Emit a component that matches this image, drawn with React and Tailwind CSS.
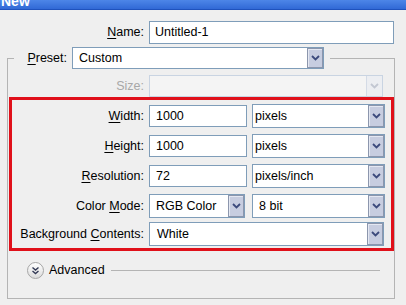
import React from "react";

function Chevron({ color = "#3c4a7c" }) {
  return (
    <svg width="9" height="6" viewBox="0 0 9 6">
      <path d="M1 1 L4.5 4.5 L8 1" stroke={color} strokeWidth="1.8" fill="none" />
    </svg>
  );
}

function DropBtn({ disabled }) {
  return disabled ? (
    <div className="flex w-[16px] items-center justify-center border-l border-[#d4dbe6] bg-[#eceef2]">
      <Chevron color="#c2c7d2" />
    </div>
  ) : (
    <div className="flex w-[16px] items-center justify-center border border-[#8c96ad] bg-[#c7cde0] shadow-[inset_1px_1px_0_#e4e8f2]">
      <Chevron />
    </div>
  );
}

function Select({ value, cls, pad = "pl-[6px]" }) {
  return (
    <div className={`flex h-[24px] items-stretch border border-[#7f9db9] bg-white ${cls}`}>
      <div className={`flex flex-1 items-center ${pad}`}>{value}</div>
      <DropBtn />
    </div>
  );
}

function U({ children }) {
  return <span className="underline underline-offset-2">{children}</span>;
}

export default function App() {
  return (
    <div className="relative h-[305px] w-[406px] overflow-hidden bg-[#efefef] font-['Liberation_Sans',Arial,sans-serif] text-[12.5px] text-black">
      <div className="h-[10px] overflow-hidden border-b border-[#1f52bd] bg-gradient-to-b from-[#4d86e8] to-[#3169d6]">
        <div className="-mt-[7px] pl-[1px] text-[14px] font-bold leading-[16px] text-white">New</div>
      </div>

      <div className="mt-[11px] flex h-[23px] items-center">
        <div className="w-[144px] text-right">
          <U>N</U>ame:
        </div>
        <div className="ml-[5px] flex h-[23px] w-[245px] items-center border border-[#7f9db9] bg-white pl-[5px]">
          Untitled-1
        </div>
      </div>

      <fieldset className="ml-[7px] mt-[3px] h-[252px] w-[382px] border border-[#b4b4b4]">
        <legend className="ml-[6px]">
          <div className="flex h-[22px] items-center pr-[6px]">
            <div className="w-[53px] text-right">
              <U>P</U>reset:
            </div>
            <div className="ml-[5px] flex h-[22px] w-[252px] items-stretch border border-[#7f9db9] bg-white">
              <div className="flex flex-1 items-center pl-[6px]">Custom</div>
              <DropBtn />
            </div>
          </div>
        </legend>

        <div className="mt-[6px] flex h-[22px] items-center">
          <div className="w-[136px] text-right text-[#a8a8a8]">Size:</div>
          <div className="ml-[5px] flex h-[22px] w-[234px] items-stretch border border-[#c9d4e2] bg-[#f4f4f4]">
            <div className="flex-1" />
            <DropBtn disabled />
          </div>
        </div>

        <div className="ml-[1px] w-[385px] border-[3px] border-[#e0101a] pb-[3px] pt-[5px]">
          <div className="flex flex-col gap-[8px]">
            <div className="flex h-[22px] items-center">
              <div className="w-[132px] text-right">
                <U>W</U>idth:
              </div>
              <div className="ml-[5px] flex h-[22px] w-[98px] items-center border border-[#7f9db9] bg-white pl-[6px]">1000</div>
              <Select value="pixels" cls="ml-[5px] w-[133px]" pad="pl-[2px]" />
            </div>
            <div className="flex h-[22px] items-center">
              <div className="w-[132px] text-right">
                <U>H</U>eight:
              </div>
              <div className="ml-[5px] flex h-[22px] w-[98px] items-center border border-[#7f9db9] bg-white pl-[6px]">1000</div>
              <Select value="pixels" cls="ml-[5px] w-[133px]" pad="pl-[2px]" />
            </div>
            <div className="flex h-[22px] items-center">
              <div className="w-[132px] text-right">
                <U>R</U>esolution:
              </div>
              <div className="ml-[5px] flex h-[22px] w-[98px] items-center border border-[#7f9db9] bg-white pl-[6px]">72</div>
              <Select value="pixels/inch" cls="ml-[5px] w-[133px]" pad="pl-[2px]" />
            </div>
            <div className="flex h-[22px] items-center">
              <div className="w-[132px] text-right">
                Color <U>M</U>ode:
              </div>
              <Select value="RGB Color" cls="ml-[5px] w-[96px]" />
              <Select value="8 bit" cls="ml-[7px] w-[133px]" />
            </div>
          </div>
          <div className="mt-[6px] flex h-[22px] items-center">
            <div className="w-[132px] text-right">
              Background <U>C</U>ontents:
            </div>
            <Select value="White" cls="ml-[5px] w-[235px]" pad="pl-[7px]" />
          </div>
        </div>

        <div className="mt-[11px] flex h-[17px] items-center">
          <div className="ml-[19px] flex h-[17px] w-[17px] items-center justify-center rounded-full border border-[#a6a6a6] bg-gradient-to-b from-white to-[#dcdcdc]">
            <svg width="9" height="9" viewBox="0 0 9 9">
              <path d="M1.5 1.5 L4.5 4 L7.5 1.5 M1.5 5 L4.5 7.5 L7.5 5" stroke="#333a55" strokeWidth="1.4" fill="none" />
            </svg>
          </div>
          <div className="ml-[5px]">Advanced</div>
          <div className="ml-[6px] mr-[14px] h-0 flex-1 border-t border-[#b4b4b4]" />
        </div>
      </fieldset>
    </div>
  );
}
